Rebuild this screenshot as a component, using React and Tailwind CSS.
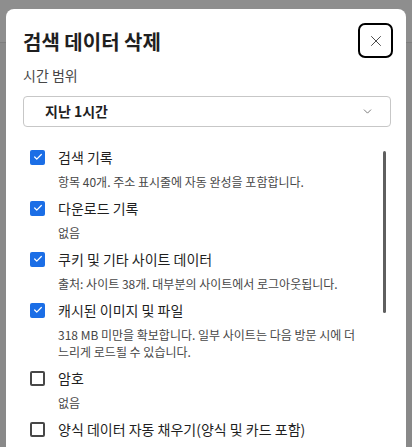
import { X, ChevronDown, Check } from 'lucide-react'

const items = [
  { label: '검색 기록', sub: '항목 40개. 주소 표시줄에 자동 완성을 포함합니다.', checked: true },
  { label: '다운로드 기록', sub: '없음', checked: true },
  { label: '쿠키 및 기타 사이트 데이터', sub: '출처: 사이트 38개. 대부분의 사이트에서 로그아웃됩니다.', checked: true },
  { label: '캐시된 이미지 및 파일', sub: '318 MB 미만을 확보합니다. 일부 사이트는 다음 방문 시에 더 느리게 로드될 수 있습니다.', checked: true },
  { label: '암호', sub: '없음', checked: false },
  { label: '양식 데이터 자동 채우기(양식 및 카드 포함)', sub: '', checked: false },
]

function Case({ checked }) {
  if (checked) {
    return (
      <span className="w-[15px] h-[15px] rounded-[2px] bg-[#1b6ee6] flex items-center justify-center shrink-0">
        <Check size={10} strokeWidth={3} className="text-white" />
      </span>
    )
  }
  return <span className="w-[15px] h-[15px] rounded-[2px] border-2 border-[#474747] shrink-0" />
}

export default function App() {
  return (
    <div
      className="relative w-[412px] h-[447px] overflow-hidden bg-[#898989]"
      style={{ fontFamily: '"Noto Sans CJK KR", "Noto Sans", sans-serif' }}
    >
      {/* page derrière le voile */}
      <div className="h-[43px] bg-[#8e8e8e] border-b border-[#7d7d7d]" />

      {/* boîte de dialogue */}
      <div className="absolute left-[6px] top-[9px] w-[400px] h-[460px] bg-white rounded-t-lg">
        <div className="flex items-start justify-between pl-[17px] pr-[13px] pt-[14px]">
          <h1 className="text-[20px] font-bold text-[#1f1f1f] leading-[38px]">검색 데이터 삭제</h1>
          <button className="w-[35px] h-[35px] border-2 border-black rounded-[7px] flex items-center justify-center">
            <X size={18} strokeWidth={1.3} className="text-[#474747]" />
          </button>
        </div>

        <div className="pl-[17px] pr-[15px]">
          <div className="text-[14px] text-[#474747] leading-[20px] mt-[4px]">시간 범위</div>
          <div className="mt-[11px] h-[31px] border border-[#c7c7c7] rounded-[4px] flex items-center justify-between pl-[21px] pr-[16px]">
            <span className="text-[14px] font-bold text-[#1f1f1f]">지난 1시간</span>
            <ChevronDown size={13} strokeWidth={1.5} className="text-[#5f5f5f]" />
          </div>
        </div>

        <div className="relative mt-[20px] pl-[24px] pr-[40px]">
          <div className="flex flex-col gap-[8px]">
            {items.map((it) => (
              <div key={it.label} className="flex gap-[13px]">
                <div className="h-[20px] flex items-center">
                  <Case checked={it.checked} />
                </div>
                <div className="flex flex-col gap-[6px]">
                  <div className="text-[14px] leading-[20px] text-[#1f1f1f]">{it.label}</div>
                  {it.sub && <div className="text-[12px] leading-[17px] text-[#474747]">{it.sub}</div>}
                </div>
              </div>
            ))}
          </div>
          {/* barre de défilement */}
          <div className="absolute left-[377px] top-[4px] w-[3px] h-[162px] bg-[#5f5f5f] rounded-full" />
        </div>
      </div>
    </div>
  )
}
